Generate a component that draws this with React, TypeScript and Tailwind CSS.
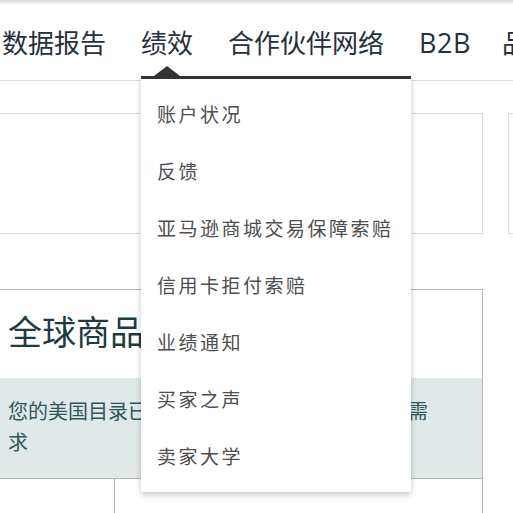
import React from "react";

const FONT = { fontFamily: '"Open Sans", "Noto Sans CJK SC", sans-serif' };

const menu = [
  "账户状况",
  "反馈",
  "亚马逊商城交易保障索赔",
  "信用卡拒付索赔",
  "业绩通知",
  "买家之声",
  "卖家大学",
];

export default function App() {
  return (
    <div className="relative w-[513px] h-[513px] overflow-hidden bg-white" style={FONT}>
      <div className="h-[5px] bg-gradient-to-b from-[#d6d6d6] to-white" />
      {/* nav */}
      <div className="h-[75px] border-b border-[#dddddd] box-content flex items-start">
        <div className="flex items-baseline gap-[35px] pl-[2px] pt-[20px] text-[26px] leading-[36px] text-[#25313c] whitespace-nowrap">
          <span>数据报告</span>
          <span>绩效</span>
          <span>合作伙伴网络</span>
          <span className="text-[27px] tracking-[0.5px]">B2B</span>
          <span className="-ml-[4px]">品牌</span>
        </div>
      </div>

      {/* cards row */}
      <div className="flex gap-[25px] -ml-[4px] mt-[32px]">
        <div className="w-[487px] shrink-0 h-[121px] border border-[#dddddd]" />
        <div className="w-[200px] shrink-0 h-[121px] border border-[#dddddd]" />
      </div>

      {/* lower box */}
      <div className="-ml-[4px] mt-[55px] w-[487px] border-t border-r border-[#b5b5b5]">
        <div className="h-[88px] flex items-center pl-[12px] pb-[4px] text-[34px] text-[#1c3c42] whitespace-nowrap">
          全球商品
        </div>
        <div className="bg-[#e1e9e8] border-b border-[#b0b8b7] h-[101px] pl-[12px] pt-[18px] text-[20px] leading-[31px] text-[#2c575b] whitespace-nowrap">
          您的美国目录已准备好满足全球买家和企业的需
          <br />求
        </div>
        <div className="grid grid-cols-[119px_1fr] h-[60px]">
          <div className="border-r border-[#b5b5b5]" />
          <div />
        </div>
      </div>

      {/* dropdown overlay */}
      <div className="absolute left-[141px] top-[76px] w-[270px]">
        <div className="absolute -top-[10px] left-[13px] w-0 h-0 border-l-[13px] border-r-[13px] border-b-[10px] border-l-transparent border-r-transparent border-b-[#333333]" />
        <div className="bg-white border-t-[3px] border-[#333333] shadow-[0_3px_6px_rgba(0,0,0,0.22)] pt-[8px] pb-[6px]">
          {menu.map((m) => (
            <div
              key={m}
              className="h-[57px] flex items-center pl-[16px] text-[19px] tracking-[2.5px] text-[#4e4e4e] whitespace-nowrap"
            >
              {m}
            </div>
          ))}
        </div>
      </div>
    </div>
  );
}
